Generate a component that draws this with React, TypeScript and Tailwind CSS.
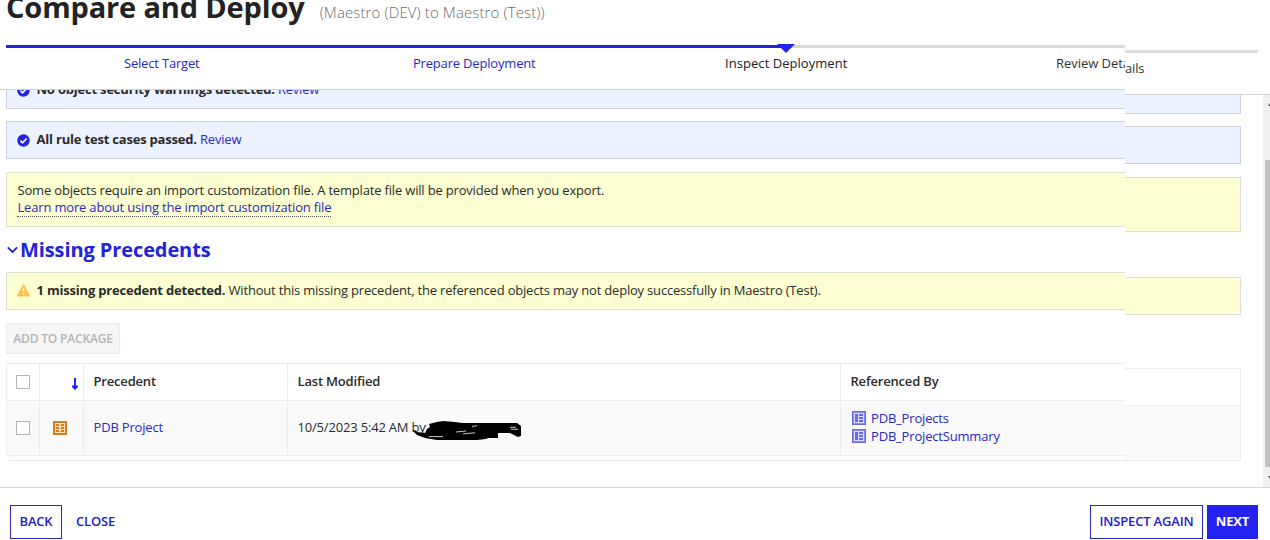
import type { ReactNode } from 'react';

function CheckCircle() {
  return (
    <svg className="mt-[2px] h-[13px] w-[13px] shrink-0" viewBox="0 0 13 13">
      <circle cx="6.5" cy="6.5" r="6.2" fill="#2322dc" />
      <path d="M3.4 6.6 5.6 8.8 9.7 4.5" fill="none" stroke="#fff" strokeWidth="1.7" />
    </svg>
  );
}

function WarningIcon() {
  return (
    <svg className="h-[13px] w-[13px] shrink-0" viewBox="0 0 13 13">
      <path d="M6.5 1.2 12.1 11.6H.9Z" fill="#ffc04c" stroke="#ffc04c" strokeWidth="1.6" strokeLinejoin="round" />
      <path d="M6.5 4.2V8M6.5 9.2v1.6" stroke="#fffbe6" strokeWidth="1.5" />
    </svg>
  );
}

function RecordTypeIcon() {
  return (
    <svg className="h-[14px] w-[14px]" viewBox="0 0 14 14" shapeRendering="crispEdges">
      <rect width="14" height="14" fill="#d67d24" />
      <rect x="2" y="2" width="10" height="10" fill="#fde3b8" />
      <path d="M3 3h3v2H3zM8 3h3v2H8zM3 6h3v2H3zM8 6h3v2H8zM3 9h3v2H3zM8 9h3v2H8z" fill="#d67d24" />
      <path d="M6 4h2M6 7h2M6 10h2" stroke="#efb473" strokeWidth="1" />
    </svg>
  );
}

function InterfaceIcon() {
  return (
    <svg className="h-[14px] w-[14px] shrink-0" viewBox="0 0 14 14" shapeRendering="crispEdges">
      <rect width="14" height="14" fill="#6a69f0" />
      <rect x="1" y="1" width="12" height="12" fill="#8b8af4" />
      <rect x="2" y="2" width="10" height="10" fill="#dcdcff" />
      <path d="M3 3h3v8H3zM7 3h4v2H7zM7 6h4v2H7zM7 9h4v2H7z" fill="#6a69f0" />
    </svg>
  );
}

function Scribble() {
  return (
    <svg className="absolute left-[125px] top-[19px] h-[22px] w-[112px]" viewBox="0 0 112 22">
      <path
        d="M0 11 2 10 4 12 12 13 14 9 17 7 16 4 20 3 24 2 30 1 42 2 49 3 104 3 108 6 108 16 105 17 101 15 97 13 85 13 85 18 75 18 73 19 64 20 24 20 12 18 4 15Z"
        fill="#000"
      />
      <path d="M16 16.6 30 16.6M59 6.4 64 5.8M50 13.8 62 12.8M43 12 53 11M97 7.3H103M98 9.3H105" fill="none" stroke="#fafafa" strokeWidth=".8" />
    </svg>
  );
}

function Checkbox() {
  return <span className="block h-[14px] w-[14px] border border-[#b4b4b4] bg-white" />;
}

function Banner({ tone, className, children }: { tone: 'info' | 'warn'; className: string; children: ReactNode }) {
  const colors = tone === 'info' ? 'border-[#d0d0d8] bg-[#ecf2ff]' : 'border-[#dddfcf] bg-[#fdfed2]';
  return <div className={`shrink-0 border border-r-0 pl-[10px] ${colors} ${className}`}>{children}</div>;
}

function Steps() {
  const step = 'w-[312.5px] shrink-0 text-center';
  return (
    <>
      <div className="relative ml-[6px] flex h-[3px]">
        <div className="w-[780px] bg-[#2322dc]" />
        <div className="flex-1 bg-[#dcdcdc]" />
        <svg className="absolute left-[771px] -top-px h-[9px] w-[18px]" viewBox="0 0 18 9">
          <path d="M0 0h18L9 9Z" fill="#2322f0" />
        </svg>
      </div>
      <div className="ml-[6px] mt-[6px] flex h-[35px] leading-[18px] text-[#2a28c4]">
        <div className={`${step} pr-px`}>Select Target</div>
        <div className={`${step} pr-px`}>Prepare Deployment</div>
        <div className={`${step} pr-[2px] font-medium tracking-[0.04px] text-[#222]`}>Inspect Deployment</div>
        <div className="whitespace-nowrap pl-[112.5px] tracking-[-0.05px] text-[#333]">Review Deta</div>
      </div>
    </>
  );
}

function PrecedentTable() {
  const grid = 'grid grid-cols-[33px_44px_204px_553px_1fr]';
  const line = 'border-r border-[#ececec]';
  return (
    <div className="ml-[6px] mt-[9px] border border-r-0 border-[#ececec]">
      <div className={`${grid} h-[37px] border-b border-[#ececec] font-semibold text-[#2b2b2b]`}>
        <div className={`pl-[9px] pt-[11px] ${line}`}><Checkbox /></div>
        <div className={`flex justify-end pr-[5px] pt-[14px] ${line}`}>
          <svg className="h-[12px] w-[6px]" viewBox="0 0 6 12"><path d="M2 0h2v7.5H6V9L3 12 0 9V7.500H2Z" fill="#2322f0" /></svg>
        </div>
        <div className={`pl-[9.5px] pt-[8px] ${line}`}>Precedent</div>
        <div className={`pl-[9.5px] pt-[8px] ${line}`}>Last Modified</div>
        <div className="pl-[9.5px] pt-[8px]">Referenced By</div>
      </div>
      <div className={`${grid} h-[54px] bg-[#fafafa]`}>
        <div className={`pl-[9px] pt-[20px] ${line}`}><Checkbox /></div>
        <div className={`pl-[13px] pt-[20px] ${line}`}><RecordTypeIcon /></div>
        <div className={`pl-[9.5px] pt-[17px] text-[#2a28c4] ${line}`}>PDB Project</div>
        <div className={`relative pl-[9.5px] pt-[17px] ${line}`}>10/5/2023 5:42 AM by<Scribble /></div>
        <div className="pl-[11px] pt-[8px] text-[#2a28c4]">
          <div className="flex h-[18px] items-center gap-[5px]"><InterfaceIcon />PDB_Projects</div>
          <div className="flex h-[18px] items-center gap-[5px]"><InterfaceIcon />PDB_ProjectSummary</div>
        </div>
      </div>
    </div>
  );
}

function MainPane() {
  return (
    <div className="flex h-[459px] w-[1125px] flex-col overflow-hidden">
      <div className="h-[90px] shrink-0 border-b border-[#d2d2d6]">
        <div className="h-[45px] overflow-hidden pl-[6px]">
          <div className="-mt-[13px] flex items-baseline gap-[15px] whitespace-nowrap leading-[40px]">
            <h1 className="text-[29px] font-bold tracking-[-0.15px] text-[#222]">Compare and Deploy</h1>
            <span className="text-[15px] font-light tracking-[0.12px] text-[#6c6c6c]">(Maestro (DEV) to Maestro (Test))</span>
          </div>
        </div>
        <Steps />
      </div>
      <div className="flex h-[369px] flex-col overflow-hidden">
        <Banner tone="info" className="-mt-[19px] ml-[6px] h-[38px]">
          <div className="mt-[8px] flex items-center gap-[6.5px] leading-[18px] tracking-[-0.2px]"><CheckCircle /><p><b>No object security warnings detected.</b> <span className="text-[#2a28c4]">Review</span></p></div>
        </Banner>
        <Banner tone="info" className="ml-[6px] mt-[12px] h-[38px]">
          <div className="mt-[8px] flex items-center gap-[6.5px] leading-[18px] tracking-[-0.2px]"><CheckCircle /><p><b>All rule test cases passed.</b> <span className="text-[#2a28c4]">Review</span></p></div>
        </Banner>
        <Banner tone="warn" className="ml-[6px] mt-[13px] h-[55px] pt-[9px] leading-[17px]">
          <p className="pl-[0.5px]">Some objects require an import customization file. A template file will be provided when you export.</p>
          <span className="inline-block h-[18px] border-b border-dotted border-[#555] pl-[0.5px] text-[#2a28c4]">Learn more about using the import customization file</span>
        </Banner>
        <h2 className="ml-[7px] mt-[9px] flex h-[28px] shrink-0 items-center gap-[2px] text-[20px] font-bold leading-[28px] tracking-[-0.1px] text-[#2322dc]">
          <svg className="h-[8px] w-[11px]" viewBox="0 0 11 8"><path d="m.8 1.3 4.7 4.6 4.7-4.6" fill="none" stroke="currentColor" strokeWidth="1.8" /></svg>
          Missing Precedents
        </h2>
        <Banner tone="warn" className="ml-[6px] mt-[8px] h-[38px]">
          <div className="mt-[8px] flex items-center gap-[6.5px] leading-[18px] tracking-[-0.195px]"><WarningIcon /><p><b>1 missing precedent detected.</b> Without this missing precedent, the referenced objects may not deploy successfully in Maestro (Test).</p></div>
        </Banner>
        <button className="ml-[6px] mt-[13px] h-[31px] w-[114px] shrink-0 border border-[#ebebeb] bg-[#f6f6f6] text-[12px] font-semibold text-[#b4b4b4]">ADD TO PACKAGE</button>
        <PrecedentTable />
      </div>
    </div>
  );
}

function EdgePane() {
  const box = 'w-[116px] shrink-0 border border-l-0';
  return (
    <div className="flex h-[487px] flex-1 flex-col overflow-hidden pt-[50px]">
      <div className="h-[3px] w-[133px] shrink-0 bg-[#dcdcdc]" />
      <div className="h-[42px] shrink-0 overflow-hidden border-b border-[#d2d2d6] pt-[6px] leading-[18px] text-[#333]">ails</div>
      <div className="flex h-[392px] justify-between">
        <div className="flex flex-col">
          <div className={`${box} h-[19px] border-t-0 border-[#d0d0d8] bg-[#ecf2ff]`} />
          <div className={`${box} mt-[12px] h-[38px] border-[#d0d0d8] bg-[#ecf2ff]`} />
          <div className={`${box} mt-[13px] h-[55px] border-[#dddddb] bg-[#fdfed2]`} />
          <div className={`${box} mt-[45px] h-[38px] border-[#dddddb] bg-[#fdfed2]`} />
          <div className={`${box} mt-[53px] h-[38px] border-[#ececec]`} />
          <div className={`${box} h-[55px] border-t-0 border-[#ececec] bg-[#fafafa]`} />
        </div>
        <div className="flex w-[7px] flex-col bg-[#f1f1f1]">
          <svg className="ml-[5px] mt-[8px] h-[3px] w-[2px]" viewBox="0 0 2 3"><path d="M0 3 2 0V3Z" fill="#505050" /></svg>
          <div className="ml-[2px] mt-[54px] h-[307px] bg-[#c1c1c1]" />
          <svg className="ml-[5px] mt-[9px] h-[3px] w-[2px]" viewBox="0 0 2 3"><path d="M0 0H2V3Z" fill="#505050" /></svg>
        </div>
      </div>
    </div>
  );
}

export default function App() {
  return (
    <div className="h-[540px] w-[1270px] overflow-hidden bg-white font-['Open_Sans',sans-serif] text-[13px] leading-[18px] tracking-[-0.18px] text-[#2b2b2b]">
      <div className="flex h-[487px]">
        <div className="w-[1125px]">
          <MainPane />
          <div className="ml-[10px] grid h-[2px] grid-cols-[34px_44px_204px_553px_1fr] border-b border-[#ececec]">
            <i className="border-r border-[#f0f0f0]" />
            <i className="border-r border-[#f0f0f0]" />
            <i className="border-r border-[#f0f0f0]" />
            <i className="border-r border-[#f0f0f0]" />
          </div>
        </div>
        <EdgePane />
      </div>
      <footer className="flex h-[53px] items-start justify-between border-t border-[#d2d2d2] pl-[10px] pr-[12px] pt-[17px] font-semibold text-[#2322c8]">
        <div className="flex">
          <button className="h-[34px] w-[52px] border border-[#2a28b8] pb-[2px]">BACK</button>
          <button className="ml-[14px] h-[34px] pb-[2px]">CLOSE</button>
        </div>
        <div className="flex gap-[4px]">
          <button className="h-[34px] w-[113px] border border-[#2a28b8] pb-[2px]">INSPECT AGAIN</button>
          <button className="h-[34px] w-[51px] bg-[#2322f0] pb-[2px] font-bold text-white">NEXT</button>
        </div>
      </footer>
    </div>
  );
}
